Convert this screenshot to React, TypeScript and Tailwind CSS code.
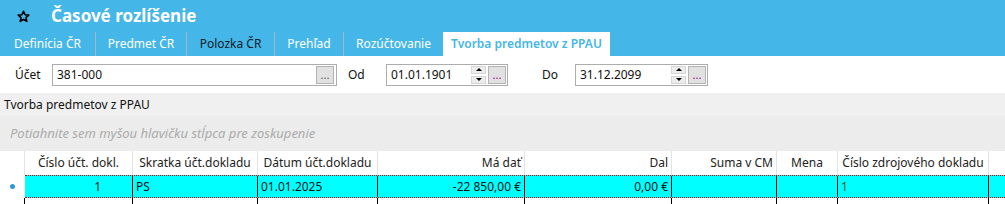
import React from "react";

const tabs = [
  { label: "Definícia ČR", w: "w-[96px]", sep: true },
  { label: "Predmet ČR", w: "w-[91px]", sep: true },
  { label: "Polozka ČR", w: "w-[88px]", sep: true, dark: true },
  { label: "Prehľad", w: "w-[69px]", sep: true },
  { label: "Rozúčtovanie", w: "w-[99px]", sep: false },
];

const cols = [
  { w: "w-[108px]", head: "Číslo účt. dokl.", ha: "justify-center", val: "1", va: "justify-end pr-[31px]" },
  { w: "w-[125px]", head: "Skratka účt.dokladu", ha: "justify-center", val: "PS", va: "justify-start pl-[3px]" },
  { w: "w-[120px]", head: "Dátum účt.dokladu", ha: "justify-center", val: "01.01.2025", va: "justify-start pl-[3px]" },
  { w: "w-[147px]", head: "Má dať", ha: "justify-end pr-[3px]", val: "-22 850,00 €", va: "justify-end pr-[3px]" },
  { w: "w-[147px]", head: "Dal", ha: "justify-end pr-[3px]", val: "0,00 €", va: "justify-end pr-[3px]" },
  { w: "w-[105px]", head: "Suma v CM", ha: "justify-end pr-[3px]", val: "", va: "" },
  { w: "w-[61px]", head: "Mena", ha: "justify-center", val: "", va: "" },
  { w: "w-[151px]", head: "Číslo zdrojového dokladu", ha: "justify-center", val: "1", va: "justify-start pl-[3px] text-[#1d5a1d]" },
];

function Star() {
  return (
    <svg width="13" height="13" viewBox="0 0 24 24" className="mr-[21px]">
      <path
        d="M12 2.5l2.9 6.3 6.8.7-5.1 4.6 1.5 6.8L12 17.4l-6.1 3.5 1.5-6.8-5.1-4.6 6.8-.7z"
        fill="none"
        stroke="#000"
        strokeWidth="3"
        strokeLinejoin="round"
      />
    </svg>
  );
}

function Spin() {
  return (
    <div className="flex w-[15px] flex-col gap-[2px]">
      <div className="flex h-[8px] items-center justify-center border border-[#d6d6d6] bg-[#ececec]">
        <div className="h-0 w-0 border-x-[3px] border-b-[3px] border-x-transparent border-b-black" />
      </div>
      <div className="flex h-[8px] items-center justify-center border border-[#d6d6d6] bg-[#ececec]">
        <div className="h-0 w-0 border-x-[3px] border-t-[3px] border-x-transparent border-t-black" />
      </div>
    </div>
  );
}

function Dots({ purple }: { purple?: boolean }) {
  return (
    <div
      className={`flex h-[18px] w-[18px] items-end justify-center border border-[#b4b4b4] bg-[#e1e1e1] pb-[3px] text-[11px] leading-[10px] ${
        purple ? "text-[#8b008b]" : "text-[#555]"
      }`}
    >
      ...
    </div>
  );
}

function DateBox({ value, w }: { value: string; w: string }) {
  return (
    <div className={`flex h-[22px] ${w} items-center border border-[#adadad] bg-white pl-[4px] pr-[1px]`}>
      <span className="flex-1 text-[12px] text-[#111]">{value}</span>
      <Spin />
      <div className="ml-[2px]">
        <Dots purple />
      </div>
    </div>
  );
}

export default function App() {
  return (
    <div className="flex h-[204px] w-[1005px] flex-col overflow-hidden bg-[#f0f0f0] font-['Noto_Sans',sans-serif] text-[12px]">
      {/* header */}
      <div className="flex h-[56px] flex-col bg-[#45b6e8]">
        <div className="flex h-[32px] items-center pl-[17px]">
          <Star />
          <span className="text-[17px] font-bold text-white">Časové rozlíšenie</span>
        </div>
        <div className="flex h-[24px] items-stretch">
          {tabs.map((t) => (
            <div
              key={t.label}
              className={`flex ${t.w} items-center justify-center ${
                t.sep ? "border-r border-[#9fb7c4]" : ""
              } ${t.dark ? "text-[#14202a]" : "text-white"}`}
            >
              {t.label}
            </div>
          ))}
          <div className="flex w-[167px] items-center justify-center bg-white font-semibold text-[#45b6e8]">
            Tvorba predmetov z PPAU
          </div>
        </div>
      </div>

      {/* filter row */}
      <div className="flex h-[37px] items-center bg-white">
        <span className="ml-[15px] w-[37px] text-[#111]">Účet</span>
        <div className="flex h-[22px] w-[285px] items-center border border-[#adadad] bg-white pl-[4px] pr-[2px]">
          <span className="flex-1 text-[#111]">381-000</span>
          <Dots />
        </div>
        <span className="ml-[11px] w-[38px] text-[#111]">Od</span>
        <DateBox value="01.01.1901" w="w-[122px]" />
        <span className="ml-[34px] w-[33px] text-[#111]">Do</span>
        <DateBox value="31.12.2099" w="w-[133px]" />
      </div>

      {/* grid area */}
      <div className="flex flex-1 flex-col">
        <div className="flex h-[23px] items-center pl-[4px] text-[#111]">Tvorba predmetov z PPAU</div>
        <div className="flex h-[35px] items-center bg-[#ececec] pl-[10px] text-[13px] italic text-[#ababab]">
          Potiahnite sem myšou hlavičku stĺpca pre zoskupenie
        </div>
        <div className="flex h-[24px] bg-white text-[#222]">
          <div className="w-[25px] border-r border-[#e3e3e3]" />
          {cols.map((c) => (
            <div key={c.head} className={`flex ${c.w} items-center ${c.ha} border-r border-[#e3e3e3]`}>
              {c.head}
            </div>
          ))}
          <div className="flex-1" />
        </div>
        <div className="flex h-[23px] bg-white">
          <div className="flex w-[25px] items-center justify-center">
            <div className="h-[5px] w-[5px] rounded-full bg-[#2b9ad6]" />
          </div>
          <div className="flex flex-1 border-y border-dotted border-[#d10000] bg-[#00ffff] text-[#111]">
            {cols.map((c) => (
              <div key={c.head} className={`flex ${c.w} items-center ${c.va} border-r border-black`}>
                {c.val}
              </div>
            ))}
            <div className="flex-1" />
          </div>
        </div>
        <div className="flex flex-1 bg-white">
          <div className="w-[25px] border-r border-black" />
          {cols.map((c) => (
            <div key={c.head} className={`${c.w} border-r border-black`} />
          ))}
        </div>
      </div>
    </div>
  );
}
